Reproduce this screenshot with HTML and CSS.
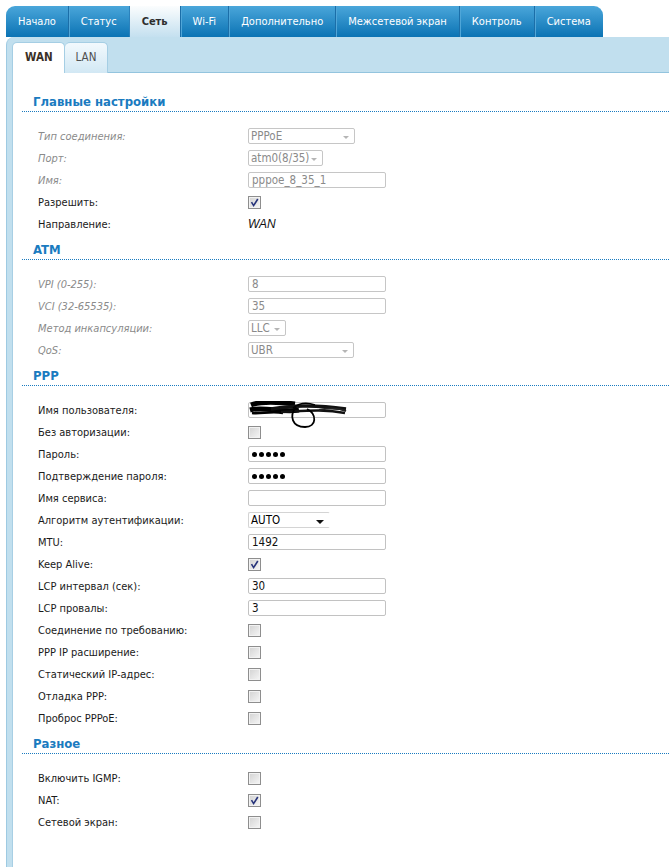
FILE: index.html
```html
<!DOCTYPE html>
<html lang="ru">
<head>
<meta charset="utf-8">
<title>WAN</title>
<link rel="stylesheet" href="styles.css">
</head>
<body>
<div class="page">
  <ul class="topnav">
    <li class="tab">Начало</li>
    <li class="tab">Статус</li>
    <li class="tab active">Сеть</li>
    <li class="tab">Wi-Fi</li>
    <li class="tab">Дополнительно</li>
    <li class="tab">Межсетевой экран</li>
    <li class="tab">Контроль</li>
    <li class="tab">Система</li>
  </ul>
  <div class="panel">
    <div class="subnav">
      <span class="subtab active">WAN</span>
      <span class="subtab">LAN</span>
    </div>
    <div class="content">

      <section class="group">
        <h2 class="group-title">Главные настройки</h2>
        <div class="rows">
          <div class="row off"><span class="label">Тип соединения:</span><span class="select off w-conn">PPPoE<i class="arrow"></i></span></div>
          <div class="row off"><span class="label">Порт:</span><span class="select off w-port">atm0(8/35)<i class="arrow"></i></span></div>
          <div class="row off"><span class="label">Имя:</span><span class="input off">pppoe_8_35_1</span></div>
          <div class="row"><span class="label">Разрешить:</span><span class="checkbox checked"><svg viewBox="0 0 11 11" width="11" height="11"><path d="M2.5 5.2 L4.6 8.6 L8.8 2" fill="none" stroke="#26337a" stroke-width="1.6"/></svg></span></div>
          <div class="row"><span class="label">Направление:</span><span class="value">WAN</span></div>
        </div>
      </section>

      <section class="group">
        <h2 class="group-title">ATM</h2>
        <div class="rows">
          <div class="row off"><span class="label">VPI (0-255):</span><span class="input off">8</span></div>
          <div class="row off"><span class="label">VCI (32-65535):</span><span class="input off">35</span></div>
          <div class="row off"><span class="label">Метод инкапсуляции:</span><span class="select off w-llc">LLC<i class="arrow"></i></span></div>
          <div class="row off"><span class="label">QoS:</span><span class="select off w-qos">UBR<i class="arrow"></i></span></div>
        </div>
      </section>

      <section class="group">
        <h2 class="group-title">PPP</h2>
        <div class="rows">
          <div class="row"><span class="label">Имя пользователя:</span><span class="input masked"><svg class="scribble" viewBox="0 0 100 30" width="100" height="30"><path d="M2 4 C12 0 30 1 46 3" stroke="#000" stroke-width="5" fill="none"/><path d="M1 9 C15 5 32 12 50 9" stroke="#000" stroke-width="5" fill="none"/><path d="M3 12 C12 13 22 10 34 12" stroke="#000" stroke-width="2.5" fill="none"/><path d="M22 8 C42 5 62 3 97 8" stroke="#111" stroke-width="3.5" fill="none"/><path d="M32 11 C55 10 75 8 96 12" stroke="#111" stroke-width="2.5" fill="none"/><path d="M70 9 C80 7 90 7 97 10" stroke="#222" stroke-width="2" fill="none"/><path d="M47 6 C40 15 43 26 56 26 C68 26 68 13 58 8" stroke="#000" stroke-width="1.8" fill="none"/><path d="M44 7 C50 2 58 1 66 4" stroke="#000" stroke-width="1.5" fill="none"/></svg></span></div>
          <div class="row"><span class="label">Без авторизации:</span><span class="checkbox"></span></div>
          <div class="row"><span class="label">Пароль:</span><span class="input dots"><i></i><i></i><i></i><i></i><i></i></span></div>
          <div class="row"><span class="label">Подтверждение пароля:</span><span class="input dots"><i></i><i></i><i></i><i></i><i></i></span></div>
          <div class="row"><span class="label">Имя сервиса:</span><span class="input"></span></div>
          <div class="row"><span class="label">Алгоритм аутентификации:</span><span class="select w-auth">AUTO<i class="arrow"></i></span></div>
          <div class="row"><span class="label">MTU:</span><span class="input">1492</span></div>
          <div class="row"><span class="label">Keep Alive:</span><span class="checkbox checked"><svg viewBox="0 0 11 11" width="11" height="11"><path d="M2.5 5.2 L4.6 8.6 L8.8 2" fill="none" stroke="#26337a" stroke-width="1.6"/></svg></span></div>
          <div class="row"><span class="label">LCP интервал (сек):</span><span class="input">30</span></div>
          <div class="row"><span class="label">LCP провалы:</span><span class="input">3</span></div>
          <div class="row"><span class="label">Соединение по требованию:</span><span class="checkbox"></span></div>
          <div class="row"><span class="label">PPP IP расширение:</span><span class="checkbox"></span></div>
          <div class="row"><span class="label">Статический IP-адрес:</span><span class="checkbox"></span></div>
          <div class="row"><span class="label">Отладка PPP:</span><span class="checkbox"></span></div>
          <div class="row"><span class="label">Проброс PPPoE:</span><span class="checkbox"></span></div>
        </div>
      </section>

      <section class="group">
        <h2 class="group-title">Разное</h2>
        <div class="rows">
          <div class="row"><span class="label">Включить IGMP:</span><span class="checkbox"></span></div>
          <div class="row"><span class="label">NAT:</span><span class="checkbox checked"><svg viewBox="0 0 11 11" width="11" height="11"><path d="M2.5 5.2 L4.6 8.6 L8.8 2" fill="none" stroke="#26337a" stroke-width="1.6"/></svg></span></div>
          <div class="row"><span class="label">Сетевой экран:</span><span class="checkbox"></span></div>
        </div>
      </section>

    </div>
  </div>
</div>
</body>
</html>
```
FILE: styles.css
```css
* { box-sizing: border-box; }
html, body { margin: 0; background: #fff; }
body {
  font-family: "DejaVu Sans Condensed", "DejaVu Sans", "Liberation Sans", sans-serif;
  font-size: 11px;
  color: #1a1a1a;
}
.page {
  padding: 6px 0 0 6px;
  height: 867px;
  overflow: hidden;
}

/* top navigation */
.topnav {
  display: flex;
  list-style: none;
  margin: 0;
  padding: 0;
  height: 31px;
}
.tab {
  height: 31px;
  line-height: 31px;
  padding: 0 12px;
  color: #fff;
  font-size: 11px;
  background: linear-gradient(#4aa6da, #0b73b4);
  border-left: 1px solid #1b6ea8;
  box-shadow: inset 1px 0 0 #4fa6d8;
  white-space: nowrap;
}
.tab:first-child { border-left: none; border-top-left-radius: 9px; box-shadow: none; }
.tab:last-child { border-top-right-radius: 9px; }
.tab.active {
  background: linear-gradient(#fbfdfe, #c4e0ef);
  color: #2e2e2e;
  font-weight: bold;
  box-shadow: none;
  border-left-color: #2c82bc;
}

/* panel */
.panel {
  background: #c1dfee;
  border-left: 1px solid #9ecae2;
  border-top-left-radius: 8px;
  padding-left: 5px;
  height: 100%;
}
.subnav {
  display: flex;
  align-items: flex-end;
  height: 36px;
  border-bottom: 1px solid #93c4de;
}
.subtab {
  height: 31px;
  margin-bottom: -1px;
  padding: 0 11px;
  line-height: 28px;
  font-size: 11.5px;
  border: 1px solid #a5cee4;
  border-bottom: none;
  border-radius: 5px 5px 0 0;
  background: linear-gradient(#f2f9fd, #d2e8f4);
  color: #505050;
}
.subtab.active {
  background: #fff;
  font-weight: bold;
  color: #3a3026;
  padding: 0 11px 0 12px;
}
.subtab + .subtab { border-left: none; }

.content {
  background: #fff;
  border-left: 1px solid #a8cfe4;
  padding-top: 21px;
  height: 100%;
}

/* groups */
.group + .group { margin-top: 7px; }
.group-title {
  margin: 0 0 0 9px;
  padding: 0 0 1px 11px;
  font-size: 13px;
  line-height: 16px;
  font-weight: bold;
  color: #1a7bc0;
  border-bottom: 1px dotted #1a7bc0;
}
.rows { padding-top: 13px; }
.row {
  display: flex;
  align-items: center;
  height: 22px;
  padding-left: 25px;
}
.label { width: 210px; flex: none; }
.row.off .label { font-style: italic; color: #8a8a8a; }

/* controls */
.input, .select {
  position: relative;
  display: inline-block;
  height: 16px;
  border: 1px solid #c2c2c2;
  border-radius: 2px;
  padding: 0 3px;
  font-family: "DejaVu Sans Condensed", "Liberation Sans", sans-serif;
  font-size: 11.5px;
  line-height: 14px;
  color: #111;
  background: #fff;
}
.input { width: 138px; }
.input.off, .select.off { color: #8a8a8a; border-color: #c6c6c6; }
.select { padding-left: 2px; }
.w-conn { width: 107px; }
.w-port { width: 75px; }
.w-llc { width: 38px; }
.w-qos { width: 106px; }
.w-auth { width: 82px; border-color: #d4d4d4; border-right-color: #fff; color: #000; }
.arrow {
  position: absolute;
  right: 5px;
  bottom: 3px;
  width: 0;
  height: 0;
  border-left: 4px solid transparent;
  border-right: 4px solid transparent;
  border-top: 4px solid #111;
}
.select.off .arrow { border-top-color: #b5b5b5; border-left-width: 3.5px; border-right-width: 3.5px; border-top-width: 3px; bottom: 4px; }

.dots { display: inline-flex; align-items: center; gap: 2px; padding-left: 3px; }
.dots i { width: 5px; height: 5px; border-radius: 50%; background: #000; display: block; }

.masked { overflow: visible; }
.scribble { position: absolute; left: 0; top: -2px; }

.checkbox {
  display: inline-flex;
  align-items: center;
  justify-content: center;
  width: 13px;
  height: 13px;
  border: 1px solid #8e8e8e;
  background: linear-gradient(135deg, #d2d2d2, #f6f6f6);
  box-shadow: inset 0 0 0 1px #f2f2f2;
}
.value { font-style: italic; font-size: 12px; color: #111; font-family: "Liberation Sans", sans-serif; }
```
